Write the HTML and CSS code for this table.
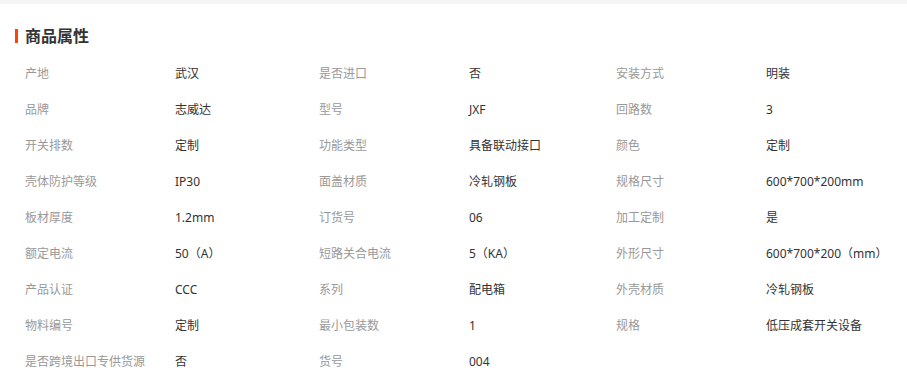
FILE: index.html
```html
<!DOCTYPE html>
<html lang="zh-CN">
<head>
<meta charset="utf-8">
<title>商品属性</title>
<link rel="stylesheet" href="styles.css">
</head>
<body>
<div class="topbar"></div>
<section class="attrs">
  <h2 class="title"><span class="mark"></span>商品属性</h2>
  <div class="grid">
    <div class="k">产地</div><div class="v">武汉</div>
    <div class="k">是否进口</div><div class="v">否</div>
    <div class="k">安装方式</div><div class="v">明装</div>

    <div class="k">品牌</div><div class="v">志威达</div>
    <div class="k">型号</div><div class="v">JXF</div>
    <div class="k">回路数</div><div class="v">3</div>

    <div class="k">开关排数</div><div class="v">定制</div>
    <div class="k">功能类型</div><div class="v">具备联动接口</div>
    <div class="k">颜色</div><div class="v">定制</div>

    <div class="k">壳体防护等级</div><div class="v">IP30</div>
    <div class="k">面盖材质</div><div class="v">冷轧钢板</div>
    <div class="k">规格尺寸</div><div class="v">600*700*200mm</div>

    <div class="k">板材厚度</div><div class="v">1.2mm</div>
    <div class="k">订货号</div><div class="v">06</div>
    <div class="k">加工定制</div><div class="v">是</div>

    <div class="k">额定电流</div><div class="v">50（A）</div>
    <div class="k">短路关合电流</div><div class="v">5（KA）</div>
    <div class="k">外形尺寸</div><div class="v">600*700*200（mm）</div>

    <div class="k">产品认证</div><div class="v">CCC</div>
    <div class="k">系列</div><div class="v">配电箱</div>
    <div class="k">外壳材质</div><div class="v">冷轧钢板</div>

    <div class="k">物料编号</div><div class="v">定制</div>
    <div class="k">最小包装数</div><div class="v">1</div>
    <div class="k">规格</div><div class="v">低压成套开关设备</div>

    <div class="k">是否跨境出口专供货源</div><div class="v">否</div>
    <div class="k">货号</div><div class="v">004</div>
    <div class="k"></div><div class="v"></div>
  </div>
</section>
</body>
</html>
```

FILE: styles.css
```css
* { box-sizing: border-box; }
html, body { margin: 0; padding: 0; background: #fff; }
body {
  font-family: "Noto Sans", "Noto Sans CJK SC", sans-serif;
  font-size: 12px;
  color: #333;
}
.topbar {
  height: 4px;
  background: #f4f4f4;
}
.attrs {
  padding: 0 0 0 15px;
}
.title {
  display: flex;
  align-items: center;
  margin: 0;
  padding-top: 19px;
  padding-bottom: 6px;
  height: 51px;
  font-size: 16px;
  font-weight: bold;
  color: #333;
  line-height: 20px;
}
.title .mark {
  display: inline-block;
  width: 3px;
  height: 14px;
  background: #ff4400;
  margin-right: 7px;
}
.grid {
  display: grid;
  grid-template-columns: 150px 144px 150px 147px 150px 1fr;
  grid-auto-rows: 36px;
  padding-left: 10px;
}
.k, .v {
  display: flex;
  align-items: center;
  white-space: nowrap;
}
.k { color: #999; }
.v { color: #333; }
```
